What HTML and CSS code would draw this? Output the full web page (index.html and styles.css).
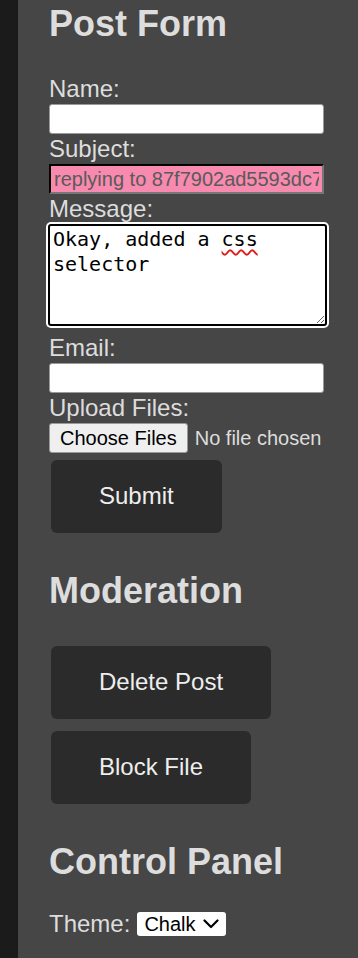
FILE: index.html
```html
<!DOCTYPE html>
<html lang="en">
<head>
    <meta charset="UTF-8">
    <meta name="viewport" content="width=device-width, initial-scale=1.0">
    <title>Post Form</title>
    <link rel="stylesheet" href="styles.css">
</head>
<body>

    <div class="page">
        <!-- Left rail -->
        <div class="rail"></div>

        <div class="main">
            <!-- Post Form -->
            <h2>Post Form</h2>
            <form class="post-form">
                <label class="field-label" for="name">Name:</label>
                <input class="text-input" type="text" id="name">

                <label class="field-label" for="subject">Subject:</label>
                <input class="text-input subject" type="text" id="subject" value="replying to 87f7902ad5593dc7">

                <label class="field-label">Message:</label>
                <div class="message" contenteditable="true">Okay, added a <span class="misspelled">css</span> selector</div>

                <label class="field-label" for="email">Email:</label>
                <input class="text-input" type="text" id="email">

                <label class="field-label" for="files">Upload Files:</label>
                <input class="file-input" type="file" id="files" multiple>

                <button class="btn submit" type="button">Submit</button>
            </form>

            <!-- Moderation -->
            <h2 class="section">Moderation</h2>
            <button class="btn delete" type="button">Delete Post</button>
            <button class="btn block" type="button">Block File</button>

            <!-- Control Panel -->
            <h2 class="section">Control Panel</h2>
            <div class="theme-row">
                <label class="theme-label" for="theme">Theme:</label>
                <span class="select-wrap">
                    <select class="theme-select" id="theme">
                        <option>Chalk</option>
                    </select>
                    <svg class="chevron" viewBox="0 0 16 10" width="16" height="10">
                        <path d="M1.5 1.5 L8 8 L14.5 1.5" fill="none" stroke="#000" stroke-width="2.2" stroke-linecap="round" stroke-linejoin="round"/>
                    </svg>
                </span>
            </div>
        </div>
    </div>

</body>
</html>
```

FILE: styles.css
```css
/* Page */
body {
    margin: 0;
    background-color: #464646;
    font-family: "Liberation Sans", Arial, sans-serif;
    color: #dddddd;
    overflow-x: hidden;
}

.page {
    display: flex;
    min-height: 100vh;
}

.rail {
    width: 18px;
    flex-shrink: 0;
    background-color: #1b1b1b;
}

.main {
    flex: 1;
    min-width: 0;
    padding: 3px 0 20px 31px;
    display: flex;
    flex-direction: column;
    align-items: flex-start;
}

/* Headings */
h2 {
    margin: 0;
    font-size: 36px;
    line-height: 41px;
    font-weight: bold;
    color: #dddddd;
}

h2.section {
    margin-top: 37px;
}

/* Form */
.post-form {
    margin-top: 30px;
    display: flex;
    flex-direction: column;
    align-items: flex-start;
}

.field-label {
    display: block;
    font-size: 24px;
    line-height: 30px;
}

.text-input {
    display: block;
    box-sizing: border-box;
    width: 275px;
    height: 30px;
    padding: 1px 4px;
    font-family: "Liberation Sans", Arial, sans-serif;
    font-size: 20px;
    background-color: #ffffff;
    border: 1px solid #9a9a9a;
    border-radius: 3px;
    outline: none;
}

.text-input.subject {
    background-color: #f78aae;
    color: #5a5a5a;
    border: 2px inset #777777;
    border-top-color: #1e1e1e;
    border-left-color: #1e1e1e;
    border-radius: 0;
    padding: 1px 3px;
}

/* Message box (focused) */
.message {
    box-sizing: border-box;
    width: 279px;
    height: 102px;
    margin-left: -1px;
    margin-bottom: 7px;
    padding: 1px 3px;
    font-family: "DejaVu Sans Mono", monospace;
    font-size: 20px;
    line-height: 25px;
    color: #000000;
    background-color: #ffffff;
    border: 2px solid #000000;
    border-radius: 3px;
    box-shadow: 0 0 0 2px #ffffff;
    resize: both;
    overflow: auto;
    outline: none;
}

.misspelled {
    text-decoration: underline wavy #e01b1b;
    text-decoration-skip-ink: none;
    text-underline-offset: 3px;
}

/* File picker */
.file-input {
    width: 280px;
    font-family: "Liberation Sans", Arial, sans-serif;
    font-size: 20px;
    color: #dddddd;
    height: 30px;
}

.file-input::file-selector-button {
    font: inherit;
    height: 30px;
    padding: 0 10px;
    margin-right: 7px;
    color: #000000;
    background-color: #efefef;
    border: 1px solid #9a9a9a;
    border-radius: 3px;
}

/* Buttons */
.btn {
    margin-left: 2px;
    padding: 22px 48px 24px;
    font-family: "Liberation Sans", Arial, sans-serif;
    font-size: 24px;
    line-height: 27px;
    color: #eeeeee;
    background-color: #2b2b2b;
    border: none;
    border-radius: 6px;
    cursor: pointer;
}

.btn.submit { margin-top: 7px; }
.btn.delete { margin-top: 35px; }
.btn.block { margin-top: 12px; }

/* Control Panel */
.theme-row {
    margin-top: 27px;
    display: flex;
    align-items: center;
    gap: 7px;
}

.theme-label {
    font-size: 24px;
    line-height: 30px;
}

.select-wrap {
    position: relative;
    display: inline-flex;
}

.theme-select {
    appearance: none;
    -webkit-appearance: none;
    box-sizing: border-box;
    width: 89px;
    height: 24px;
    padding: 0 0 0 7px;
    font-family: "Liberation Sans", Arial, sans-serif;
    font-size: 20px;
    line-height: 24px;
    color: #000000;
    background-color: #ffffff;
    border: none;
    border-radius: 3px;
}

.chevron {
    position: absolute;
    right: 7px;
    top: 7px;
    pointer-events: none;
}
```
